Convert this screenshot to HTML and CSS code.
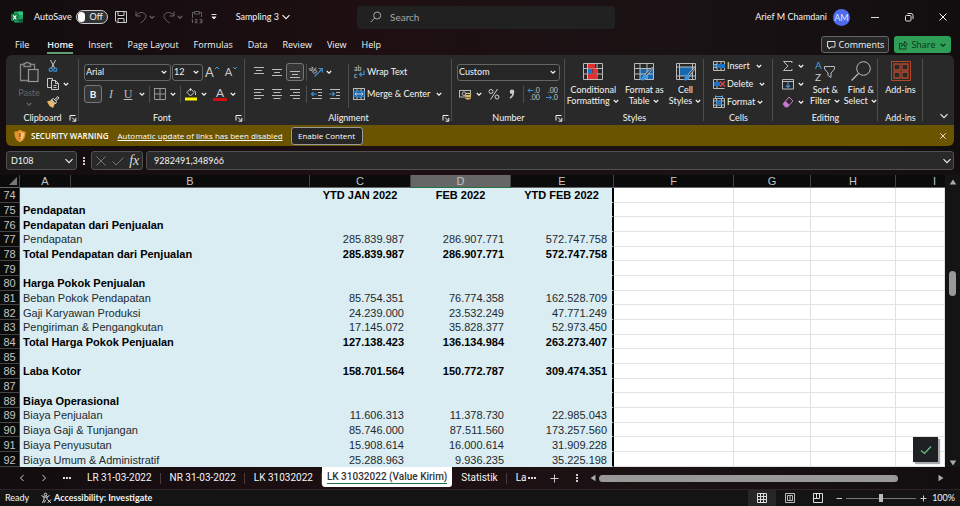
FILE: index.html
```html
<!DOCTYPE html>
<html lang="en">
<head>
<meta charset="utf-8">
<title>Sampling 3 - Excel</title>
<link rel="stylesheet" href="styles.css">
</head>
<body>
<svg class="defs" aria-hidden="true">
  <symbol id="chev" viewBox="0 0 8 8"><path d="M1.8 3 4 5.2 6.2 3" fill="none" stroke="currentColor" stroke-width="1.2"/></symbol>
  <symbol id="chev-lg" viewBox="0 0 10 10"><path d="M1.5 3.2 5 6.7 8.5 3.2" fill="none" stroke="currentColor" stroke-width="1.1"/></symbol>
  <symbol id="launch" viewBox="0 0 8 8"><path d="M1 6.5V1.5H6.5M3 3.5 6.5 7M6.8 3.8V7.2H3.5" fill="none" stroke="currentColor"/></symbol>
  <symbol id="close" viewBox="0 0 10 10"><path d="M1.5 1.5 8.5 8.5M8.5 1.5 1.5 8.5" fill="none" stroke="currentColor"/></symbol>
</svg>

<header class="titlebar">
  <div class="quick">
    <svg class="i12" viewBox="0 0 12 12"><rect x="3" y="0.5" width="9" height="11" rx="1" fill="#21a366"/><path d="M7.5.5H11a1 1 0 0 1 1 1V4H7.5z" fill="#33c481"/><path d="M7.5 8H12v2.5a1 1 0 0 1-1 1H7.5z" fill="#185c37"/><rect y="2.5" width="7.5" height="7.5" rx=".8" fill="#107c41"/><path d="M2.2 4.3 5.3 8.3M5.3 4.3 2.2 8.3" stroke="#fff" stroke-width="1.1"/></svg>
    <label class="autosave">AutoSave <span class="toggle"><input type="checkbox"><span>Off</span></span></label>
    <button class="ico" aria-label="Save"><svg class="i14" viewBox="0 0 14 14"><path d="M1.5 1.5H12.5V12.5H3L1.5 11ZM4 1.5V5.5H10V1.5M4 12.5V8.5H10V12.5" fill="none" stroke="#ccc"/></svg></button>
    <button class="ico dim" aria-label="Undo"><svg class="i14" viewBox="0 0 14 14"><path d="M2 1.5V6H6.5M2 6C4 2.5 8 1.5 10.5 3.5S12.500 9 6.500 13" fill="none" stroke="currentColor"/></svg><svg class="i8"><use href="#chev"/></svg></button>
    <button class="ico dim" aria-label="Redo"><svg class="i14" viewBox="0 0 14 14"><path d="M12 1.500V6H7.500M12 6C10 2.500 6 1.500 3.500 3.500S1.500 9 7.500 13" fill="none" stroke="currentColor"/></svg><svg class="i8"><use href="#chev"/></svg></button>
    <button class="ico dim" aria-label="Paste values"><svg class="i14" viewBox="0 0 14 14"><path d="M4.500 2.500H2.500V8M9.500 2.500H11.500V7M4.500 1.500H9.500V4H4.500ZM2.500 9.500V13M1.500 10 2.500 9.500M5 9.500H7V11.200H5.300V12.800H7.500M9.500 9.500H12V12.800H9.500M10 11.200H12" fill="none" stroke="currentColor" stroke-width=".9"/></svg></button>
    <button class="ico" aria-label="Customize toolbar"><svg class="i8" viewBox="0 0 8 8"><path d="M1.500 1.500H6.500M2 4 4 6 6 4" fill="none" stroke="#ddd"/><path d="M1.500 3.500H6.500L4 6z" fill="#ddd"/></svg></button>
    <button class="doc">Sampling 3 <svg class="i10"><use href="#chev-lg"/></svg></button>
  </div>
  <label class="search"><svg class="i12" viewBox="0 0 12 12"><circle cx="7.200" cy="4.500" r="3.500" fill="none" stroke="#aaa"/><path d="M4.700 7 .8 11" stroke="#aaa"/></svg><input type="text" placeholder="Search" aria-label="Search"></label>
  <div class="account">
    <span>Arief M Chamdani</span><span class="avatar">AM</span>
    <button class="win" aria-label="Minimize"><svg class="i10" viewBox="0 0 10 10"><path d="M1 5.500H9" stroke="#ddd"/></svg></button>
    <button class="win" aria-label="Restore"><svg class="i10" viewBox="0 0 10 10"><rect x="1.500" y="3.500" width="5.500" height="5.500" rx="1" fill="none" stroke="#ddd"/><path d="M3.500 1.500H7a2 2 0 0 1 2 2V7" fill="none" stroke="#ddd"/></svg></button>
    <button class="win" aria-label="Close"><svg class="i10"><use href="#close"/></svg></button>
  </div>
</header>

<nav class="menu">
  <a href="#" class="file">File</a><a href="#" class="on">Home</a><a href="#">Insert</a><a href="#">Page Layout</a><a href="#">Formulas</a><a href="#">Data</a><a href="#">Review</a><a href="#">View</a><a href="#">Help</a>
  <button class="comments"><svg class="i10" viewBox="0 0 10 10"><path d="M1.500 1.500H9V7H5L3 9V7H1.500Z" fill="none" stroke="#ddd"/></svg>Comments</button>
  <button class="share"><svg class="i10" viewBox="0 0 10 10"><path d="M4 3.500H1.500V9H8V6.500M3.500 6.500C3.500 4.500 5 3.500 6.500 3.500V1.500L9.300 4.200 6.500 6.500V5C5 5 4.200 5.500 3.500 6.500Z" fill="none" stroke="#0c3318" stroke-width=".9"/></svg>Share<svg class="i8"><use href="#chev"/></svg></button>
</nav>

<main class="panel">
<div class="ribbon">
  <section class="group">
    <div class="body clip">
      <button class="big dim"><svg class="paste" viewBox="0 0 22 22"><path d="M6 3.500H2.500V19.500H10M12 3.500H16.500V8M6 5.500V2.500H7.500C7.500 1 11 1 11 2.500H12.500V5.500Z" fill="none" stroke="#858585" stroke-width="1.300"/><rect x="10.500" y="8.500" width="9.500" height="12" fill="#2e2e2e" stroke="#999" stroke-width="1.200"/></svg><span>Paste</span><svg class="i8"><use href="#chev"/></svg></button>
      <div class="stack">
        <button class="ico" aria-label="Cut"><svg class="i14" viewBox="0 0 14 14"><path d="M4.500 1 8.500 9M9.500 1 5.500 9" stroke="#ccc" fill="none"/><g fill="none" stroke="#3e8fd0" stroke-width="1.200"><circle cx="4.700" cy="10.700" r="1.600"/><circle cx="9.300" cy="10.700" r="1.600"/></g></svg></button>
        <button class="ico" aria-label="Copy"><svg class="i14" viewBox="0 0 14 14"><path d="M5 10.500H1.500V1.500H6.500V3M5.500 3.500H9.500L12.500 6.500V12.500H5.500ZM9.500 3.500V6.500H12.500M7.500 8.500H10.500M7.500 10.500H10.500" fill="none" stroke="#ccc"/></svg><svg class="i8"><use href="#chev"/></svg></button>
        <button class="ico" aria-label="Format painter"><svg class="i14" viewBox="0 0 14 14"><path d="M1 6.500 5.500 5 9 8.500 7 13 3.500 11Z" fill="#e8b868"/><path d="M5.500 4.500 7.500 3.500 10.500 6.500 9.500 9ZM9 4.500 11.500 1.500 13 3 10 5.500" fill="#333" stroke="#ddd"/></svg></button>
      </div>
    </div>
    <h2><span>Clipboard</span><button aria-label="Clipboard settings"><svg class="i8"><use href="#launch"/></svg></button></h2>
  </section>

  <section class="group">
    <div class="body rows">
      <div class="row"><span class="sel face"><select aria-label="Font"><option>Arial</option></select><svg class="i8"><use href="#chev"/></svg></span><span class="sel size"><select aria-label="Font size"><option>12</option></select><svg class="i8"><use href="#chev"/></svg></span>
        <button class="ico grow" aria-label="Grow font"><span class="A">A</span><svg class="caret" viewBox="0 0 6 10"><path d="M1 4 3 2 5 4" fill="none" stroke="#4a9ad8"/></svg></button><button class="ico grow" aria-label="Shrink font"><span class="A small">A</span><svg class="caret" viewBox="0 0 6 10"><path d="M1 2 3 4 5 2" fill="none" stroke="#4a9ad8"/></svg></button></div>
      <div class="row"><button class="w18 boxed"><b>B</b></button><button class="w18 serif"><i>I</i></button><button class="w16 serif"><u>U</u></button><svg class="i8 ml"><use href="#chev"/></svg><i class="vr"></i>
        <button class="ico" aria-label="Borders"><svg class="i14" viewBox="0 0 14 14"><path d="M1.500 1V12.500H12.500V1.500H1.500M7 1.500V12.500M1.500 7H12.500" fill="none" stroke="#999"/></svg></button><svg class="i8 ml"><use href="#chev"/></svg><i class="vr"></i>
        <button class="ico" aria-label="Fill color"><svg class="i14" viewBox="0 0 14 14"><path d="M6.500 1.500 3 5.500 6.500 9 10 5.500ZM6.500 1V4M10.500 3.500C12 5 11.500 6.500 11.500 8" fill="none" stroke="#ccc"/><rect x="1" y="10.500" width="12" height="3" fill="#fff200"/></svg></button><svg class="i8 ml"><use href="#chev"/></svg>
        <button class="ico fontcol" aria-label="Font color"><span>A</span></button><svg class="i8 ml"><use href="#chev"/></svg></div>
    </div>
    <h2><span>Font</span><button aria-label="Font settings"><svg class="i8"><use href="#launch"/></svg></button></h2>
  </section>

  <section class="group">
    <div class="body split">
      <div class="rows">
        <div class="row">
          <button class="w18" aria-label="Top align"><svg class="i14" viewBox="0 0 14 14"><path d="M2 2.500H12M4 5.500H10M2 8.500H12" stroke="#bbb"/></svg></button><button class="w18" aria-label="Middle align"><svg class="i14" viewBox="0 0 14 14"><path d="M2 4.500H12M4 7.500H10M2 10.500H12" stroke="#bbb"/></svg></button><button class="w18 boxed" aria-label="Bottom align"><svg class="i14" viewBox="0 0 14 14"><path d="M2 6.500H12M4 9.500H10M2 12.500H12" stroke="#bbb"/></svg></button><i class="vr tight"></i>
          <button class="w16" aria-label="Orientation"><svg class="i14" viewBox="0 0 14 14"><path d="M4.500 11.500 12 4M8.500 3.500H12.300V7.500" fill="none" stroke="#3e8fd0" stroke-width="1.200"/><text x="0" y="6" transform="rotate(42 2 3)" font-size="8" fill="#ccc">ab</text></svg></button><svg class="i8"><use href="#chev"/></svg>
        </div>
        <div class="row">
          <button class="w18" aria-label="Align left"><svg class="i14" viewBox="0 0 14 14"><path d="M2 2.500H12M2 5.500H9M2 8.500H12M2 11.500H9" stroke="#bbb"/></svg></button><button class="w18" aria-label="Center"><svg class="i14" viewBox="0 0 14 14"><path d="M2 2.500H12M3.500 5.500H10.500M2 8.500H12M3.500 11.500H10.500" stroke="#bbb"/></svg></button><button class="w18" aria-label="Align right"><svg class="i14" viewBox="0 0 14 14"><path d="M2 2.500H12M5 5.500H12M2 8.500H12M5 11.500H12" stroke="#bbb"/></svg></button><i class="vr tight"></i>
          <button class="w16" aria-label="Decrease indent"><svg class="i14" viewBox="0 0 14 14"><path d="M2 2.500H12M8 5.500H12M8 8.500H12M2 11.500H12" stroke="#bbb"/><path d="M7 7H1.500M3.500 5 1.500 7 3.500 9" fill="none" stroke="#3e8fd0" stroke-width="1.200"/></svg></button><button class="w16 ml" aria-label="Increase indent"><svg class="i14" viewBox="0 0 14 14"><path d="M2 2.500H12M8 5.500H12M8 8.500H12M2 11.500H12" stroke="#bbb"/><path d="M1 7H6.500M4.500 5 6.500 7 4.500 9" fill="none" stroke="#3e8fd0" stroke-width="1.200"/></svg></button>
        </div>
      </div>
      <i class="vr tall"></i>
      <div class="rows">
        <button class="row txt"><svg class="i14" viewBox="0 0 14 14"><text x="2" y="5.500" font-size="7" fill="#ccc">ab</text><text x="2" y="13" font-size="7" fill="#ccc">c</text><path d="M12 5.500V9.500H7.500M9.500 7.500 7.500 9.500 9.500 11.500" fill="none" stroke="#3e8fd0" stroke-width="1.200"/></svg>Wrap Text</button>
        <button class="row txt"><svg class="i14" viewBox="0 0 14 14"><rect x="1.500" y="1.500" width="11" height="11" fill="none" stroke="#bbb"/><path d="M5 1.500V4M9 1.500V4M5 10V12.500M9 10V12.500" stroke="#bbb"/><rect x="1.500" y="4" width="11" height="6" fill="#1668b0" stroke="#58a6e0" stroke-width=".6"/><path d="M3 7H11M4.500 5.500 3 7 4.500 8.500M9.500 5.500 11 7 9.500 8.500" fill="none" stroke="#ddd" stroke-width=".9"/></svg>Merge &amp; Center<svg class="i8 far"><use href="#chev"/></svg></button>
      </div>
    </div>
    <h2><span>Alignment</span><button aria-label="Alignment settings"><svg class="i8"><use href="#launch"/></svg></button></h2>
  </section>

  <section class="group">
    <div class="body rows">
      <div class="row"><span class="sel wide"><select aria-label="Number format"><option>Custom</option></select><svg class="i8"><use href="#chev"/></svg></span></div>
      <div class="row"><button class="w16" aria-label="Accounting format"><svg class="i14" viewBox="0 0 14 14"><rect x="1.500" y="3.500" width="11" height="6.500" fill="none" stroke="#bbb"/><circle cx="6" cy="6.700" r="1.800" fill="none" stroke="#bbb"/><ellipse cx="10" cy="7.500" rx="2.700" ry="1.200" fill="#3a3320" stroke="#f0d890"/><path d="M7.300 7.500V11.500C8 13 12 13 12.700 11.500V7.500C12 9 8 9 7.300 7.500" fill="#d9b65c"/><path d="M7.500 10.500H12.500" stroke="#4a3c18" stroke-width=".7"/></svg></button><svg class="i8 ml"><use href="#chev"/></svg>
        <button class="w18 ml" aria-label="Percent"><svg class="i14" viewBox="0 0 14 14"><g fill="none" stroke="#ccc"><circle cx="4" cy="4.500" r="2"/><circle cx="10" cy="10" r="2"/><path d="M10.500 2 3.500 12.500"/></g></svg></button><button class="w18" aria-label="Comma style"><svg class="i14" viewBox="0 0 14 14"><circle cx="7" cy="4.800" r="2.300" fill="#ccc"/><path d="M8.300 4.500C8.500 7.500 7.500 9.500 5 11" fill="none" stroke="#ccc" stroke-width="1.500"/></svg></button><i class="vr tight"></i>
        <button class="w16" aria-label="Increase decimal"><svg class="i14" viewBox="0 0 14 14"><path d="M6.500 3.500H1M3 1.500 1 3.500 3 5.500" fill="none" stroke="#3e8fd0"/><text x="7" y="5.500" font-size="7" fill="#ccc">.0</text><text x="3" y="13" font-size="7" fill="#ccc">.00</text></svg></button><button class="w16 ml" aria-label="Decrease decimal"><svg class="i14" viewBox="0 0 14 14"><path d="M1 10.500H6.500M4.500 8.500 6.500 10.500 4.500 12.500" fill="none" stroke="#3e8fd0"/><text x="3" y="5.500" font-size="7" fill="#ccc">.00</text><text x="7" y="13" font-size="7" fill="#ccc">.0</text></svg></button></div>
    </div>
    <h2><span>Number</span><button aria-label="Number settings"><svg class="i8"><use href="#launch"/></svg></button></h2>
  </section>

  <section class="group">
    <div class="body bigs">
      <button class="big"><svg class="pic" viewBox="0 0 22 20"><path d="M1.500 2.500H20.500V18.500H1.500ZM5.500 2.500V18.500M15 2.500V18.500M1.500 7.500H20.500M1.500 13H20.500" fill="none" stroke="#bbb"/><path d="M6 3H13V7.500H6ZM6 13H15V18H6Z" fill="#e03030"/><path d="M6 8H10V12.500H6Z" fill="#1c72c4"/><path d="M10.500 8H15V12.500H10.500Z" fill="#e03030"/></svg><span>Conditional<br>Formatting <svg class="i8"><use href="#chev"/></svg></span></button>
      <button class="big"><svg class="pic" viewBox="0 0 22 20"><path d="M7 8H20V18H7Z" fill="#1668b0"/><path d="M1.500 2.500H20.500V18.500H1.500ZM7 2.500V18.500M14 2.500V18.500M1.500 7.500H20.500M1.500 13H20.500" fill="none" stroke="#bbb"/><path d="M20.500 7 13.500 14.500 12 13.500 19.500 6Z" fill="#292929" stroke="#ddd" stroke-width=".8"/><path d="M12.500 13.500C9 13.500 10 17 7 18.500 10 20.500 14 19 14 15Z" fill="#3e96dc"/></svg><span>Format as<br>Table <svg class="i8"><use href="#chev"/></svg></span></button>
      <button class="big"><svg class="pic" viewBox="0 0 22 20"><path d="M4 6H18V15H4Z" fill="#1668b0"/><path d="M1.500 2.500H20.500V18.500H1.500ZM4.500 2.500V18.500M1.500 6H20.500M1.500 15H20.500M17.500 2.500V18.500" fill="none" stroke="#bbb"/><path d="M21 7 14.500 14.500 13 13.500 20 6Z" fill="#292929" stroke="#ddd" stroke-width=".8"/><path d="M13.500 13.500C10 13.500 11 17 8 18.500 11 20.500 15 19 15 15Z" fill="#3e96dc"/></svg><span>Cell<br>Styles <svg class="i8"><use href="#chev"/></svg></span></button>
    </div>
    <h2><span>Styles</span></h2>
  </section>

  <section class="group">
    <div class="body stack cells">
      <button class="txt"><svg class="i14" viewBox="0 0 14 14"><path d="M1.500 2.500H12.500V11.500H1.500ZM5 2.500V11.500M9 2.500V11.500M1.500 5.500H12.500M1.500 8.500H12.500" fill="none" stroke="#bbb"/><path d="M5 5H13V9H5Z" fill="#1c72c4"/><path d="M5.500 7H1M3 5 1 7 3 9" fill="none" stroke="#58a6e0"/></svg>Insert<svg class="i8 far"><use href="#chev"/></svg></button>
      <button class="txt"><svg class="i14" viewBox="0 0 14 14"><path d="M1.500 2.500H12.500M1.500 11.500H12.500M1.500 2.500V11.500M5 2.500V11.500M1.500 5.500H6M1.500 8.500H6" fill="none" stroke="#bbb"/><path d="M2 5H8V9H2Z" fill="#1c72c4"/><path d="M8 4.500 13 9.500M13 4.500 8 9.500" stroke="#e04848" stroke-width="1.200"/></svg>Delete<svg class="i8 far"><use href="#chev"/></svg></button>
      <button class="txt"><svg class="i14" viewBox="0 0 14 14"><path d="M1.500 3.500H12.500V12.500H1.500ZM4.500 3.500V12.500M9.500 3.500V12.500M1.500 6H12.500M1.500 10H12.500" fill="none" stroke="#bbb"/><path d="M4.500 5.500H9.500V10H4.500Z" fill="#1c72c4"/><path d="M3.500 1.500H10.500M3.500.500V3M10.500.500V3" fill="none" stroke="#58a6e0"/></svg>Format<svg class="i8"><use href="#chev"/></svg></button>
    </div>
    <h2><span>Cells</span></h2>
  </section>

  <section class="group">
    <div class="body edit">
      <div class="stack">
        <button class="ico" aria-label="AutoSum"><svg class="i14" viewBox="0 0 14 14"><path d="M11 4V2.500H2.500L7 7 2.500 11.500H11V10" fill="none" stroke="#bbb"/></svg><svg class="i8"><use href="#chev"/></svg></button>
        <button class="ico" aria-label="Fill"><svg class="i14" viewBox="0 0 14 14"><path d="M1.500 2.500H12.500V12H1.500ZM1.500 4.500H12.500" fill="none" stroke="#bbb"/><path d="M7 5V10.500M5 8.500 7 10.500 9 8.500" fill="none" stroke="#3e8fd0" stroke-width="1.200"/></svg><svg class="i8"><use href="#chev"/></svg></button>
        <button class="ico" aria-label="Clear"><svg class="i14" viewBox="0 0 14 14"><path d="M8 2 12 6 6.500 12H4.500L2 9Z" fill="none" stroke="#c678cf"/><path d="M4.500 6 8.500 10 6.500 12H4.500L2 9Z" fill="#c678cf"/></svg><svg class="i8"><use href="#chev"/></svg></button>
      </div>
      <button class="big"><svg class="pic" viewBox="0 0 22 20"><text x="1" y="8" font-size="10" fill="#4a9ad8">A</text><text x="1" y="20" font-size="10" fill="#ccc">Z</text><path d="M10.500 5.500H20.500V8L17 12V16.500L14 14.500V12L10.500 8Z" fill="none" stroke="#bbb"/></svg><span>Sort &amp;<br>Filter <svg class="i8"><use href="#chev"/></svg></span></button>
      <button class="big"><svg class="pic" viewBox="0 0 22 20"><circle cx="13.500" cy="7.500" r="6.800" fill="none" stroke="#bbb"/><path d="M8.500 12.500 1.500 19.500" stroke="#bbb" stroke-width="1.300"/></svg><span>Find &amp;<br>Select <svg class="i8"><use href="#chev"/></svg></span></button>
    </div>
    <h2><span>Editing</span></h2>
  </section>

  <section class="group">
    <div class="body bigs"><button class="big"><svg class="pic" viewBox="0 0 22 20"><g fill="none" stroke="#b5482a"><path d="M1.500.500H20.500V19.500H1.500Z"/><path d="M4 3H10V9H4ZM12 3H18V9H12ZM4 11H10V17H4ZM12 11H18V17H12Z" stroke-width="1.300"/></g></svg><span>Add-ins</span></button></div>
    <h2 class="plain"><span>Add-ins</span></h2>
  </section>
  <button class="collapse" aria-label="Collapse ribbon"><svg class="i10"><use href="#chev-lg"/></svg></button>
</div>

<div class="warning" role="alert">
  <svg class="i14" viewBox="0 0 14 14"><path d="M7 .8C9 2.200 10.500 2.500 12.500 2.500 12.800 8 11 11.500 7 13.300 3 11.500 1.200 8 1.500 2.500 3.500 2.500 5 2.200 7 .8Z" fill="#e8912d"/><path d="M7 2.500C8.500 3.500 9.500 3.800 11 4 11 8 10 10 7 11.800Z" fill="#f6c67a"/><path d="M7 4V8M7 9V10.300" stroke="#7a4a10" stroke-width="1.200"/></svg>
  <strong>SECURITY WARNING</strong><a href="#">Automatic update of links has been disabled</a><button class="enable">Enable Content</button>
  <button class="ico end" aria-label="Dismiss"><svg class="i8" viewBox="0 0 10 10"><use href="#close"/></svg></button>
</div>
</main>

<div class="formula">
  <span class="field name"><input type="text" value="D108" aria-label="Name box"><svg class="i10"><use href="#chev-lg"/></svg></span>
  <svg class="dots" viewBox="0 0 4 10"><path d="M1 1H3V3H1ZM1 4H3V6H1ZM1 7H3V9H1Z" fill="#ccc"/></svg>
  <span class="field acts"><button aria-label="Cancel"><svg class="i12" viewBox="0 0 12 12"><path d="M1.500 1.500 10.500 10.500M10.500 1.500 1.500 10.500" stroke="#777"/></svg></button><button aria-label="Enter"><svg class="i12" viewBox="0 0 12 12"><path d="M.5 6.500 4 10 11.500 2.500" fill="none" stroke="#777"/></svg></button><button class="fx">fx</button></span>
  <span class="field expr"><input type="text" value="9282491,348966" aria-label="Formula bar"><svg class="i10"><use href="#chev-lg"/></svg></span>
</div>

<div class="sheet">
  <div class="gridwrap">
  <table>
    <colgroup><col class="c0"><col class="cA"><col class="cB"><col class="cC"><col class="cD"><col class="cE"><col class="cF"><col class="cG"><col class="cH"><col></colgroup>
    <thead><tr><th class="corner"><svg class="i8" viewBox="0 0 8 8"><path d="M8 0V8H0Z" fill="#777"/></svg></th><th>A</th><th>B</th><th>C</th><th class="cur">D</th><th>E</th><th>F</th><th>G</th><th>H</th><th class="last">I</th></tr></thead>
    <tbody>
      <tr class="b h"><th>74</th><td colspan="2"></td><td>YTD JAN 2022</td><td>FEB 2022</td><td>YTD FEB 2022</td><td></td><td></td><td></td><td></td></tr>
      <tr class="b"><th>75</th><td colspan="2">Pendapatan</td><td></td><td></td><td></td><td></td><td></td><td></td><td></td></tr>
      <tr class="b"><th>76</th><td colspan="2">Pendapatan dari Penjualan</td><td></td><td></td><td></td><td></td><td></td><td></td><td></td></tr>
      <tr><th>77</th><td colspan="2">Pendapatan</td><td>285.839.987</td><td>286.907.771</td><td>572.747.758</td><td></td><td></td><td></td><td></td></tr>
      <tr class="b"><th>78</th><td colspan="2">Total Pendapatan dari Penjualan</td><td>285.839.987</td><td>286.907.771</td><td>572.747.758</td><td></td><td></td><td></td><td></td></tr>
      <tr><th>79</th><td colspan="2"></td><td></td><td></td><td></td><td></td><td></td><td></td><td></td></tr>
      <tr class="b"><th>80</th><td colspan="2">Harga Pokok Penjualan</td><td></td><td></td><td></td><td></td><td></td><td></td><td></td></tr>
      <tr><th>81</th><td colspan="2">Beban Pokok Pendapatan</td><td>85.754.351</td><td>76.774.358</td><td>162.528.709</td><td></td><td></td><td></td><td></td></tr>
      <tr><th>82</th><td colspan="2">Gaji Karyawan Produksi</td><td>24.239.000</td><td>23.532.249</td><td>47.771.249</td><td></td><td></td><td></td><td></td></tr>
      <tr><th>83</th><td colspan="2">Pengiriman &amp; Pengangkutan</td><td>17.145.072</td><td>35.828.377</td><td>52.973.450</td><td></td><td></td><td></td><td></td></tr>
      <tr class="b"><th>84</th><td colspan="2">Total Harga Pokok Penjualan</td><td>127.138.423</td><td>136.134.984</td><td>263.273.407</td><td></td><td></td><td></td><td></td></tr>
      <tr><th>85</th><td colspan="2"></td><td></td><td></td><td></td><td></td><td></td><td></td><td></td></tr>
      <tr class="b"><th>86</th><td colspan="2">Laba Kotor</td><td>158.701.564</td><td>150.772.787</td><td>309.474.351</td><td></td><td></td><td></td><td></td></tr>
      <tr><th>87</th><td colspan="2"></td><td></td><td></td><td></td><td></td><td></td><td></td><td></td></tr>
      <tr class="b"><th>88</th><td colspan="2">Biaya Operasional</td><td></td><td></td><td></td><td></td><td></td><td></td><td></td></tr>
      <tr><th>89</th><td colspan="2">Biaya Penjualan</td><td>11.606.313</td><td>11.378.730</td><td>22.985.043</td><td></td><td></td><td></td><td></td></tr>
      <tr><th>90</th><td colspan="2">Biaya Gaji &amp; Tunjangan</td><td>85.746.000</td><td>87.511.560</td><td>173.257.560</td><td></td><td></td><td></td><td></td></tr>
      <tr><th>91</th><td colspan="2">Biaya Penyusutan</td><td>15.908.614</td><td>16.000.614</td><td>31.909.228</td><td></td><td></td><td></td><td></td></tr>
      <tr><th>92</th><td colspan="2">Biaya Umum &amp; Administratif</td><td>25.288.963</td><td>9.936.235</td><td>35.225.198</td><td></td><td></td><td></td><td></td></tr>
    </tbody>
  </table>
  <button class="check" aria-label="Done"><svg class="i12" viewBox="0 0 12 12"><path d="M1 6.500 4.500 9.500 11 2.500" fill="none" stroke="#6fc48a" stroke-width="1.200"/></svg></button>
  </div>
  <div class="vscroll"><svg class="i8" viewBox="0 0 8 8"><path d="M4 1.500 7.300 6.500H.7Z" fill="#aaa"/></svg><span class="thumb"></span><svg class="i8" viewBox="0 0 8 8"><path d="M4 6.500 7.300 1.500H.7Z" fill="#aaa"/></svg></div>
</div>

<div class="tabs">
  <div class="navs"><button aria-label="Previous sheet"><svg class="i10" viewBox="0 0 10 10"><path d="M6.500 2 3.500 5 6.500 8" fill="none" stroke="#ccc"/></svg></button><button aria-label="Next sheet"><svg class="i10" viewBox="0 0 10 10"><path d="M3.500 2 6.500 5 3.500 8" fill="none" stroke="#ccc"/></svg></button><button aria-label="More sheets"><svg class="i10" viewBox="0 0 10 10"><path d="M1 4H3V6H1ZM4 4H6V6H4ZM7 4H9V6H7Z" fill="#ddd"/></svg></button></div>
  <button class="tab">LR 31-03-2022</button><button class="tab">NR 31-03-2022</button><button class="tab">LK 31032022</button><button class="tab on"><span>LK 31032022 (Value Kirim)</span></button><button class="tab">Statistik</button><button class="tab cut">La</button>
  <div class="more"><button aria-label="More tabs"><svg class="i10" viewBox="0 0 10 10"><path d="M1 4H3V6H1ZM4 4H6V6H4ZM7 4H9V6H7Z" fill="#ddd"/></svg></button><button aria-label="New sheet"><svg class="i10" viewBox="0 0 10 10"><path d="M5.500 1.500V9.500M1.500 5.500H9.500" stroke="#ccc"/></svg></button><svg class="dots" viewBox="0 0 4 10"><path d="M1 1H3V3H1ZM1 4H3V6H1ZM1 7H3V9H1Z" fill="#ccc"/></svg></div>
  <div class="hscroll"><svg class="i8" viewBox="0 0 8 8"><path d="M1.500 4 6.500.7V7.300Z" fill="#aaa"/></svg><span class="track"><span class="thumb"></span></span><svg class="i8" viewBox="0 0 8 8"><path d="M6.500 4 1.500.7V7.300Z" fill="#aaa"/></svg></div>
</div>

<footer class="status">
  <span class="ready">Ready</span>
  <svg class="i12" viewBox="0 0 12 12"><circle cx="5.500" cy="2.500" r="1.300" fill="none" stroke="#ddd"/><path d="M1.500 3.500 4 5V7.500L2.500 11M9.500 3.500 7 5V7.500M4 5H7M5.500 8 4.500 10.500M7.500 7.500 11 11M11 7.500 7.500 11" fill="none" stroke="#ddd"/></svg>
  <strong>Accessibility: Investigate</strong>
  <div class="views">
    <button class="sel-view" aria-label="Normal"><svg class="i12" viewBox="0 0 12 12"><path d="M1.500 1.500H10.500V10.500H1.500ZM4.500 1.500V10.500M7.500 1.500V10.500M1.500 4.500H10.500M1.500 7.500H10.500" fill="none" stroke="#ddd"/></svg></button>
    <button aria-label="Page layout"><svg class="i12" viewBox="0 0 12 12"><path d="M1.500 1.500H10.500V10.500H1.500ZM3.500 3.500H8.500V8.500H3.500ZM5 5H7M5 7H7" fill="none" stroke="#bbb"/></svg></button>
    <button aria-label="Page break preview"><svg class="i12" viewBox="0 0 12 12"><path d="M1.500 1.500H10.500V10.500H1.500ZM1.500 6.500H7.500V1.500M4.500 1.500V6.500" fill="none" stroke="#ddd"/></svg></button>
  </div>
  <button class="zb" aria-label="Zoom out"><svg class="i8" viewBox="0 0 8 8"><path d="M1.500 4.500H7" stroke="#ccc"/></svg></button><input type="range" min="0" max="100" value="50" aria-label="Zoom"><button class="zb" aria-label="Zoom in"><svg class="i8" viewBox="0 0 8 8"><path d="M1.500 4.500H7.500M4.500 1.500V7.500" stroke="#ccc"/></svg></button>
  <span class="pct">100%</span>
</footer>
</body>
</html>
```
FILE: styles.css
```css
* { box-sizing: border-box; }
body {
  margin: 0; height: 100vh; display: flex; flex-direction: column; overflow: hidden;
  background: linear-gradient(90deg, #130d10 0, #1e0f12 40%, #1a1214 70%, #120e10 100%);
  color: #f4f4f4; font: 9px/12px Lato, "Open Sans", sans-serif;
}
button, input, select { font: inherit; color: inherit; background: none; border: 0; margin: 0; padding: 0; }
button { display: inline-flex; align-items: center; justify-content: center; white-space: nowrap; }
a { color: inherit; text-decoration: none; }
svg { flex: none; display: block; overflow: visible; }
.defs { position: absolute; width: 0; height: 0; }
.i8 { width: 8px; height: 8px; }
.i10 { width: 10px; height: 10px; }
.i12 { width: 12px; height: 12px; }
.i14 { width: 14px; height: 14px; }
.dim { color: #666; }

.titlebar { display: grid; grid-template-columns: 357px 258px 1fr; align-items: center; height: 34px; }
.quick { display: flex; align-items: center; gap: 6px; padding-left: 11px; }
.autosave { display: flex; align-items: center; gap: 4px; padding-left: 5px; }
.toggle { display: flex; align-items: center; width: 32px; height: 14px; padding: 0 4px 0 1px; gap: 4px; border: 1px solid #ccc; border-radius: 7px; background: #333; }
.toggle input { appearance: none; width: 10px; height: 10px; border-radius: 5px; background: #fff; }
.doc { gap: 2px; margin-left: 12px; }
.search { display: flex; align-items: center; gap: 8px; height: 23px; padding: 0 13px; border-radius: 4px; background: #212121; }
.search input { flex: 1; min-width: 0; font-size: 10px; outline: 0; }
.search input::placeholder { color: #a8a8a8; }
.account { display: flex; align-items: center; justify-content: flex-end; }
.avatar { width: 17px; height: 17px; margin: 0 8px 0 6px; border-radius: 9px; background: #4f6bed; color: #dfe5ff; line-height: 17px; text-align: center; }
.win { width: 34px; height: 20px; }

.menu { display: flex; align-items: center; height: 21px; padding: 0 9px 0 7px; font: 9px/12px "Open Sans", "Noto Sans", sans-serif; }
.menu a { margin: 0 7px 0 8px; height: 18px; line-height: 17px; }
.menu .file { margin-right: 10px; }
.menu .on { font-weight: 600; border-bottom: 2px solid #5f9e76; }
.comments { height: 17px; width: 68px; gap: 3px; margin-left: auto; border: 1px solid #666; border-radius: 3px; background: #262626; }
.share { height: 17px; width: 57px; gap: 3px; margin-left: 5px; border-radius: 3px; background: #2f9f58; color: #0c3318; }

.panel { margin: 0 6px; border-radius: 6px; overflow: hidden; background: #292929; }
.ribbon { display: grid; grid-template-columns: 73px 166px 207px 113px 139px 69px 105px 45px 1fr; height: 70px; }
.group { display: grid; grid-template-rows: 1fr 12px; padding: 4px 0 1px; position: relative; }
.group::after { content: ""; position: absolute; right: 0; top: 4px; bottom: 4px; width: 1px; background: #4d4d4d; }
.group h2 { display: grid; grid-template-columns: 12px 1fr 12px; margin: 0; font: inherit; text-align: center; }
.group h2 span { grid-column: 2; white-space: nowrap; }
.group .plain { display: block; }
.body { min-width: 0; padding-left: 5px; }
.rows { display: grid; grid-template-rows: 18px 18px; gap: 4px; padding-top: 4px; align-content: start; justify-content: start; }
.row { display: flex; align-items: center; justify-content: flex-start; }
.clip { display: flex; padding-left: 6px; }
.stack { display: grid; grid-template-rows: 14px 14px 14px; gap: 4px; justify-items: start; align-content: start; }
.stack .ico { gap: 2px; }
.big { flex-direction: column; justify-content: flex-start; line-height: 11px; }
.big span { padding-top: 3px; }
.big span svg { display: inline-block; vertical-align: -1px; }
.clip .big { width: 34px; }
.clip .big .i8 { margin-top: 2px; }
.paste { width: 22px; height: 24px; margin-top: 1px; }
.pic { width: 22px; height: 20px; margin-top: 2px; }
.sel { display: grid; grid-template-columns: 1fr 10px; align-items: center; height: 17px; border: 1px solid #666; border-radius: 3px; background: #262626; }
.sel select { appearance: none; grid-area: 1 / 1 / 2 / 3; width: 100%; padding-left: 1px; outline: 0; }
.sel svg { grid-area: 1 / 2; pointer-events: none; }
.face { width: 87px; }
.size { width: 31px; margin-left: 1px; }
.wide { width: 103px; }
.grow { width: 19px; align-items: flex-start; }
.A { font-size: 13px; line-height: 14px; color: #ccc; }
.small { font-size: 11px; }
.caret { width: 6px; height: 10px; }
.w16 { width: 16px; height: 18px; }
.w18 { width: 18px; height: 18px; }
.boxed { border: 1px solid #777; border-radius: 3px; background: #363636; font-size: 10px; }
.serif { font: 12px/14px "Liberation Serif", serif; color: #bbb; }
.ml { margin-left: 2px; }
.vr { width: 1px; height: 17px; margin: 0 3px; background: #4d4d4d; }
.vr.tight { margin: 0 2px; }
.vr.tall { height: 44px; margin: 0 3px; align-self: center; }
.fontcol { width: 14px; height: 14px; margin-left: 5px; border-bottom: 3px solid #d01010; font-size: 12px; line-height: 11px; color: #ccc; }
.split { display: flex; }
.split > .rows:first-child { width: 95px; }
.txt { gap: 1px; }
.txt .far { margin-left: 4px; }
.bigs { display: flex; justify-content: center; gap: 5px; }
.group .bigs { padding-left: 0; }
.body.cells { padding-left: 8px; }
.edit { display: flex; gap: 3px; padding-left: 8px; }
.edit .stack { margin-right: 2px; }
.collapse { align-self: end; justify-self: end; margin: 0 5px 4px 0; }

.warning { display: flex; align-items: center; height: 21px; padding: 0 7px; background: #6b5400; color: #fff; font: 8px/12px "Open Sans", "Noto Sans", sans-serif; }
.warning strong { margin: 0 9px 0 4px; font-weight: 600; }
.warning a { text-decoration: underline; }
.enable { height: 18px; width: 72px; margin-left: 8px; border: 1px solid #999; border-radius: 3px; background: #262626; }
.end { margin-left: auto; }

.formula { display: flex; align-items: center; height: 29px; padding: 0 6px; }
.field { display: flex; align-items: center; height: 19px; border: 1px solid #505050; border-radius: 3px; background: #292929; }
.field input { flex: 1; min-width: 0; outline: 0; }
.name { width: 71px; padding: 0 2px 0 4px; }
.dots { width: 4px; height: 10px; margin: 0 5px; }
.acts { width: 52px; justify-content: space-around; color: #777; }
.fx { font: italic 14px/14px "Liberation Serif", serif; color: #ddd; }
.expr { flex: 1; margin-left: 3px; padding: 0 1px 0 7px; }

.sheet { flex: 1; min-height: 0; display: flex; font: 11px/11px "Liberation Sans", Arial, sans-serif; }
.gridwrap { flex: 1; position: relative; background: #fff; overflow: hidden; }
table { width: 100%; height: 100%; table-layout: fixed; border-collapse: separate; border-spacing: 0; color: #1c2a30; }
.c0 { width: 20px; } .cA { width: 51px; } .cB { width: 239px; } .cC { width: 101px; } .cD { width: 100px; } .cE { width: 103px; } .cF { width: 120px; } .cG { width: 77px; } .cH { width: 85px; }
th { padding: 0; background: #0b0b0b; color: #c4c4c4; font-weight: 400; }
thead th { height: 13px; line-height: 12px; border-right: 1px solid #444; border-bottom: 1px solid #666; }
thead .cur { background: #666; border-bottom-color: #217346; }
.corner svg { margin-left: auto; margin-right: 2px; }
thead .last { text-align: right; padding-right: 9px; border-right: 0; }
tbody th { padding-top: 2px; border-bottom: 1px solid #444; border-right: 1px solid #444; }
td { padding: 2px 6px 0 0; text-align: right; white-space: nowrap; border-right: 1px solid #e2e2e2; border-bottom: 1px solid #e2e2e2; }
td:nth-child(-n+5) { background: #daedf3; border-color: #daedf3; }
td:nth-child(2) { padding-left: 3px; text-align: left; }
td:nth-child(5) { border-right: 2px solid #000; padding-right: 5px; }
.b td { font-weight: 700; color: #000; }
tbody .h td { text-align: center; padding: 2px 0 0; }
.check { position: absolute; right: 7px; bottom: 5px; width: 25px; height: 25px; background: #1e2124; box-shadow: 2px 2px 1px #aaa; }
.vscroll { width: 15px; display: flex; flex-direction: column; align-items: center; padding: 3px 0 0; background: #141414; }
.vscroll .thumb { width: 7px; height: 25px; margin: 85px 0 auto; border-radius: 4px; background: #999; }

.tabs { display: flex; height: 22px; align-items: stretch; font: 10px/12px Roboto, "Open Sans", sans-serif; }
.navs { display: flex; width: 78px; padding-left: 11px; }
.navs button { width: 23px; }
.tab { position: relative; padding: 0 9px; }
.tab::after { content: ""; position: absolute; right: 0; top: 6px; bottom: 5px; width: 1px; background: #4a3c3e; }
.tab.on { margin: 0; padding: 0 5px; height: 20px; background: #fff; color: #333; font-weight: 500; border-radius: 0 0 3px 3px; }
.tab.on span { border-bottom: 1px solid #217346; }
.tab.on::after { display: none; }
.tab.cut { width: 20px; padding: 0 0 0 9px; justify-content: flex-start; overflow: hidden; }
.tab.cut::after { display: none; }
.more { display: flex; align-items: center; gap: 12px; }
.more .dots { margin: 0 5px 0 4px; }
.hscroll { flex: 1; display: flex; align-items: center; margin-left: 5px; padding-right: 15px; }
.track { flex: 1; margin: 0 2px; }
.track .thumb { display: block; width: 89%; height: 7px; border-radius: 4px; background: #999; }

.status { display: flex; align-items: center; height: 17px; padding: 0 5px; background: #141414; border-top: 1px solid #2c2426; }
.status strong { margin-left: 2px; font-weight: 700; }
.ready { width: 35px; }
.views { display: flex; margin-left: auto; align-self: stretch; }
.views button { width: 28px; }
.sel-view { background: #262626; }
.zb { width: 14px; }
.status input { appearance: none; width: 70px; height: 12px; }
.status input::-webkit-slider-runnable-track { height: 1px; background: #777; }
.status input::-webkit-slider-thumb { appearance: none; width: 4px; height: 8px; margin-top: -4px; background: #bbb; }
.pct { width: 25px; text-align: right; }
```
